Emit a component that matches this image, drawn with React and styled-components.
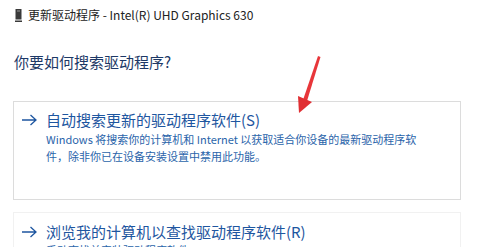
import React from "react";
import styled, { createGlobalStyle } from "styled-components";

const Global = createGlobalStyle`
  html, body { margin: 0; padding: 0; background: #ffffff; }
  body { font-family: "Noto Sans CJK SC", "Noto Sans", sans-serif; }
`;

const Page = styled.div`
  position: relative;
  width: 487px;
  height: 247px;
  overflow: hidden;
  background: #ffffff;
`;

const TitleBar = styled.div`
  display: flex;
  align-items: center;
  gap: 6px;
  height: 16px;
  padding: 7px 0 0 15px;
  font-size: 12px;
  line-height: 16px;
  color: #222222;
`;

const Heading = styled.h1`
  margin: 0;
  padding: 29px 0 0 14px;
  font-size: 15px;
  line-height: 20px;
  font-weight: 400;
  color: #1c3866;
`;

const Card = styled.div`
  margin: ${(p) => p.$top}px 26px 0 13px;
  border: 1px solid ${(p) => (p.$faint ? "#f1f1f1" : "#dcdcdc")};
  padding: ${(p) => p.$padTop}px 0 ${(p) => p.$padBottom}px 7px;
  display: grid;
  grid-template-columns: 16px 1fr;
  column-gap: 9px;
  min-height: ${(p) => p.$minH || 0}px;
  box-sizing: border-box;
`;

const ArrowCell = styled.div`
  height: 20px;
  display: flex;
  align-items: center;
`;

const LinkText = styled.div`
  font-size: 15px;
  line-height: 20px;
  color: #1e56a0;
  white-space: nowrap;
`;

const Desc = styled.div`
  grid-column: 2;
  font-size: 11px;
  line-height: 17px;
  color: #2a64aa;
  white-space: nowrap;
`;

const Overlay = styled.svg`
  position: absolute;
  left: 290px;
  top: 50px;
`;

const DeviceIcon = () => (
  <svg width="7" height="13" viewBox="0 0 7 13">
    <rect x="0.5" y="0" width="6" height="10.5" fill="#3a3a3a" />
    <rect x="2" y="1.5" width="3" height="1" fill="#9a9a9a" />
    <rect x="0" y="11.5" width="7" height="1.5" fill="#3a3a3a" />
  </svg>
);

const Arrow = () => (
  <svg width="16" height="12" viewBox="0 0 16 12">
    <path d="M1 6 H15 M9.5 1 L15 6 L9.5 11" fill="none" stroke="#1e56a0" strokeWidth="1.3" />
  </svg>
);

export default function App() {
  return (
    <>
      <Global />
      <Page>
        <TitleBar>
          <DeviceIcon />
          <span>更新驱动程序 - Intel(R) UHD Graphics 630</span>
        </TitleBar>
        <Heading>你要如何搜索驱动程序?</Heading>
        <Card $top={29} $padTop={8} $padBottom={34} $minH={99}>
          <ArrowCell><Arrow /></ArrowCell>
          <LinkText>自动搜索更新的驱动程序软件(S)</LinkText>
          <Desc>
            {"Windows 将搜索你的计算机和 Internet 以获取适合你设备的最新驱动程序软"}
            <br />
            {"件，除非你已在设备安装设置中禁用此功能。"}
          </Desc>
        </Card>
        <Card $top={12} $padTop={9} $padBottom={10} $faint>
          <ArrowCell><Arrow /></ArrowCell>
          <LinkText>浏览我的计算机以查找驱动程序软件(R)</LinkText>
          <Desc>手动查找并安装驱动程序软件。</Desc>
        </Card>
        <Overlay width="40" height="70" viewBox="0 0 40 70">
          <path d="M28 6 L30.5 7 L17 51 L13 50 Z" fill="#e8363a" />
          <path d="M8 46 L22 52 L9 63 Z" fill="#e02f33" />
        </Overlay>
      </Page>
    </>
  );
}
